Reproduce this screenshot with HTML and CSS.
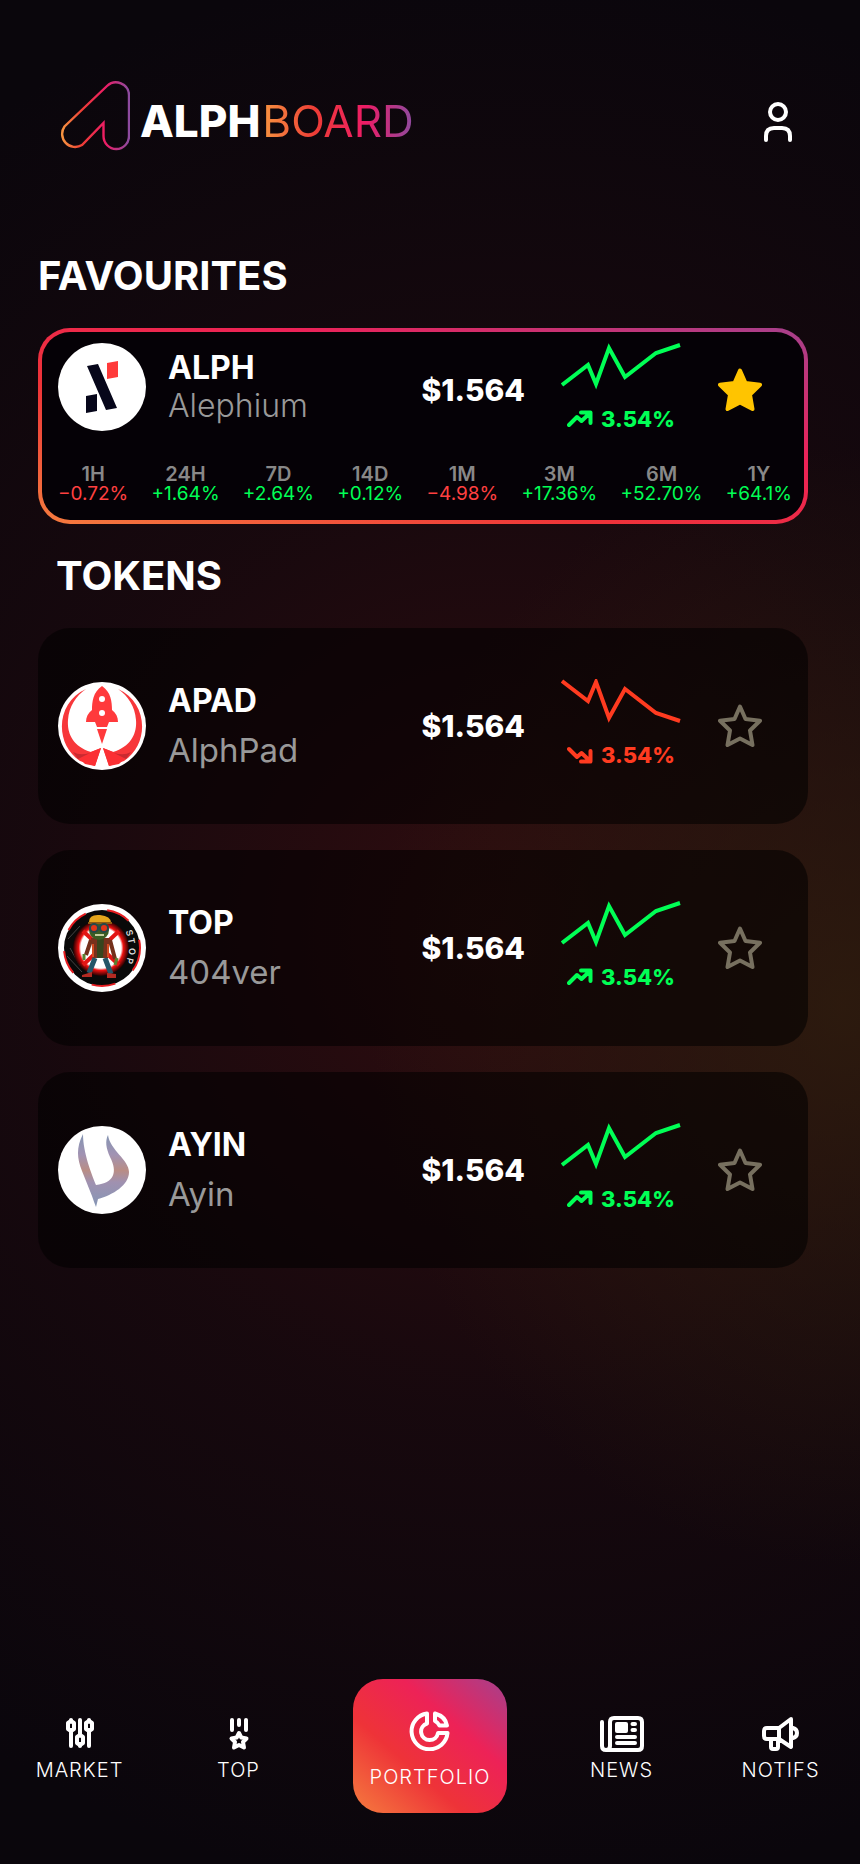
FILE: index.html
```html
<!DOCTYPE html>
<html lang="en">
<head>
    <meta charset="UTF-8">
    <meta name="viewport" content="width=device-width, initial-scale=1.0">
    <title>AlphBoard</title>
    <link rel="stylesheet" href="styles.css">
</head>
<body>
    <!-- shared icons -->
    <svg class="sprite" aria-hidden="true">
        <symbol id="chart-up" viewBox="0 0 120 48">
            <path d="M1 42 L27 22 L35 41 L48 5 L64 34 L95 10 L119 2" fill="none" stroke="currentColor" stroke-width="4"/>
        </symbol>
        <symbol id="chart-down" viewBox="0 0 120 48">
            <path d="M1 2 L27 22 L35 3 L48 39 L64 10 L95 34 L119 42" fill="none" stroke="currentColor" stroke-width="4"/>
        </symbol>
        <symbol id="trend-up" viewBox="0 0 26 18">
            <path d="M2 15 L10 7 L14.500 11 L23 3 M14 2.500 H23.500 V13" fill="none" stroke="currentColor" stroke-width="4" stroke-linecap="round" stroke-linejoin="round"/>
        </symbol>
        <symbol id="trend-down" viewBox="0 0 26 18">
            <path d="M2 3 L10 11 L14.500 7 L23 15 M14 15.500 H23.500 V5" fill="none" stroke="currentColor" stroke-width="4" stroke-linecap="round" stroke-linejoin="round"/>
        </symbol>
        <symbol id="star" viewBox="0 0 44 44">
            <path d="M22 2.500 L27.500 15 L42 16.700 L32 26.500 L34.500 41 L22 34.500 L9.500 41 L12 26.500 L2 16.700 L16.500 15 Z" stroke="currentColor" stroke-width="4" stroke-linejoin="round"/>
        </symbol>
    </svg>

    <header>
        <a class="logo" href="#">
            <svg class="logo-mark" viewBox="0 0 70 70" fill="none">
                <defs>
                    <linearGradient id="logoGradient" x1="0" y1="0" x2="1" y2="0">
                        <stop offset="0" stop-color="#f79440"/>
                        <stop offset="0.3" stop-color="#ee3c36"/>
                        <stop offset="0.65" stop-color="#ed1c66"/>
                        <stop offset="1" stop-color="#8c4ba0"/>
                    </linearGradient>
                </defs>
                <path d="M47 5 A13 13 0 0 1 69 14 V55 A12.700 13 0 0 1 43.500 55 V42 L22 64 A13 13 0 0 1 4.500 45.500 Z" stroke="url(#logoGradient)" stroke-width="2.400"/>
            </svg>
            <span class="logo-text"><b>ALPH</b><span class="logo-board">BOARD</span></span>
        </a>
        <button class="profile" aria-label="Profile">
            <svg viewBox="0 0 32 42" fill="none" stroke="#fff" stroke-width="4" stroke-linecap="round">
                <circle cx="16" cy="11" r="8"/>
                <path d="M4 39 V35 Q4 27 12 27 H20 Q28 27 28 35 V39"/>
            </svg>
        </button>
    </header>

    <main>
        <h2>FAVOURITES</h2>
        <section class="card favourite">
            <div class="row">
                <svg class="avatar" viewBox="0 0 88 88">
                    <circle cx="44" cy="44" r="44" fill="#fff"/>
                    <path d="M29 23 L40 21 L59 65 L48 67 Z M28 53 L39 51 V68 L28 70 Z" fill="#06061a"/>
                    <path d="M49 20 L60 18 V34 L49 36 Z" fill="#ff3a3a"/>
                </svg>
                <div class="name">
                    <h3>ALPH</h3>
                    <p>Alephium</p>
                </div>
                <span class="price">$1.564</span>
                <div class="trend up">
                    <svg class="chart"><use href="#chart-up"/></svg>
                    <span class="change"><svg><use href="#trend-up"/></svg>3.54%</span>
                </div>
                <button class="star starred" aria-label="Remove from favourites"><svg><use href="#star"/></svg></button>
            </div>
            <dl class="periods">
                <div><dt>1H</dt><dd class="down">−0.72%</dd></div>
                <div><dt>24H</dt><dd class="up">+1.64%</dd></div>
                <div><dt>7D</dt><dd class="up">+2.64%</dd></div>
                <div><dt>14D</dt><dd class="up">+0.12%</dd></div>
                <div><dt>1M</dt><dd class="down">−4.98%</dd></div>
                <div><dt>3M</dt><dd class="up">+17.36%</dd></div>
                <div><dt>6M</dt><dd class="up">+52.70%</dd></div>
                <div><dt>1Y</dt><dd class="up">+64.1%</dd></div>
            </dl>
        </section>

        <h2 class="indent">TOKENS</h2>
        <div class="tokens">
            <section class="card row">
                <svg class="avatar" viewBox="0 0 88 88">
                    <circle cx="44" cy="44" r="44" fill="#fff"/>
                    <path d="M28 7 C-2 20 -4 62 22 79 L37 84 L43 66 L33 70 C14 64 9 50 10 38 C11 24 18 14 28 7 Z M60 7 C90 20 92 62 66 79 L51 84 L45 66 L55 70 C74 64 79 50 78 38 C77 24 70 14 60 7 Z" fill="#f7373a"/>
                    <path d="M20 75 L43 66 L37 84 L27 82 Z M68 75 L45 66 L51 84 L61 82 Z" fill="#fb3034"/>
                    <path d="M15 70 Q22 74 32 71 L20 77 Z M73 70 Q66 74 56 71 L68 77 Z" fill="#c92a30"/>
                    <path d="M44 4 C35 10 34 20 34 28 C30 31 28 35 28 40 H37 L39 45 H49 L51 40 H60 C60 35 58 31 54 28 C54 20 53 10 44 4 Z M39 47 H49 L44 62 Z" fill="#ff3a3c"/>
                    <circle cx="44" cy="17" r="3" fill="#fff"/>
                    <circle cx="44" cy="31" r="3" fill="#fff"/>
                </svg>
                <div class="name">
                    <h3>APAD</h3>
                    <p>AlphPad</p>
                </div>
                <span class="price">$1.564</span>
                <div class="trend falling">
                    <svg class="chart"><use href="#chart-down"/></svg>
                    <span class="change"><svg><use href="#trend-down"/></svg>3.54%</span>
                </div>
                <button class="star" aria-label="Add to favourites"><svg><use href="#star"/></svg></button>
            </section>

            <section class="card row">
                <svg class="avatar" viewBox="0 0 88 88">
                    <defs>
                        <radialGradient id="stopGlow">
                            <stop offset="0.72" stop-color="#fff"/>
                            <stop offset="0.8" stop-color="#f01010"/>
                            <stop offset="1" stop-color="#200"/>
                        </radialGradient>
                    </defs>
                    <circle cx="44" cy="44" r="44" fill="#fff"/>
                    <circle cx="44" cy="44" r="38" fill="#090909" stroke="#e51c20" stroke-width="2" stroke-dasharray="24 22"/>
                    <path d="M10 35 L22 22 M12 44 L22 62 M9 52 L24 68" stroke="#444" stroke-width="1"/>
                    <circle cx="43" cy="44" r="28" fill="url(#stopGlow)"/>
                    <path d="M25 27 L61 61 M61 27 L25 61" stroke="#e31515" stroke-width="4"/>
                    <path d="M37 54 L31 69 M47 54 L53 70" stroke="#245668" stroke-width="5"/>
                    <path d="M24 71 L34 68 V73 H24 Z M49 69 L58 70 V74 H49 Z" fill="#b32a22"/>
                    <path d="M33 36 L28 51 M52 36 L57 55" stroke="#74301b" stroke-width="4"/>
                    <path d="M33 34 H52 L50 54 H35 Z" fill="#78301c"/>
                    <path d="M39 34 H46 L45 54 H39 Z" fill="#37451e"/>
                    <path d="M35 40 V53 M50 40 V53" stroke="#d44b20" stroke-width="2"/>
                    <circle cx="41" cy="26" r="10" fill="#3b5d23"/>
                    <path d="M31 18 Q31 10 42 11 Q53 12 53 19 Z" fill="#e4a51c"/>
                    <path d="M30 19 H54" stroke="#8d5b13" stroke-width="2"/>
                    <circle cx="36" cy="24" r="4" fill="#e33518" stroke="#25474a" stroke-width="2"/>
                    <circle cx="46" cy="24" r="4" fill="#e33518" stroke="#25474a" stroke-width="2"/>
                    <path d="M37 31 H46" stroke="#c4cc9c" stroke-width="2"/>
                    <path d="M26 50 V56 M59 54 L57 61" stroke="#5a8130" stroke-width="3"/>
                    <g class="stop-text">
                        <text x="69" y="31" transform="rotate(70 71 28)">S</text>
                        <text x="71" y="39" transform="rotate(80 73 36)">T</text>
                        <text x="72" y="49" transform="rotate(95 74 46)">O</text>
                        <text x="70" y="59" transform="rotate(105 72 56)">P</text>
                    </g>
                </svg>
                <div class="name">
                    <h3>TOP</h3>
                    <p>404ver</p>
                </div>
                <span class="price">$1.564</span>
                <div class="trend up">
                    <svg class="chart"><use href="#chart-up"/></svg>
                    <span class="change"><svg><use href="#trend-up"/></svg>3.54%</span>
                </div>
                <button class="star" aria-label="Add to favourites"><svg><use href="#star"/></svg></button>
            </section>

            <section class="card row">
                <svg class="avatar" viewBox="0 0 88 88">
                    <defs>
                        <linearGradient id="ayinGradient" x1="0" y1="0" x2="0" y2="1">
                            <stop offset="0" stop-color="#8495b2"/>
                            <stop offset="0.28" stop-color="#a193b3"/>
                            <stop offset="0.5" stop-color="#b98d85"/>
                            <stop offset="0.66" stop-color="#a091b0"/>
                            <stop offset="1" stop-color="#8496b5"/>
                        </linearGradient>
                    </defs>
                    <circle cx="44" cy="44" r="44" fill="#fff"/>
                    <path d="M25 8 C18 22 19 32 24 45 L34 70 Q36 76 38 81 L40 73 C55 69 71 59 71 46 C71 34 52 24 50 9 C47 15 48 22 52 31 C60 46 56 57 38 59 C34 49 25 27 25 8 Z" fill="url(#ayinGradient)"/>
                </svg>
                <div class="name">
                    <h3>AYIN</h3>
                    <p>Ayin</p>
                </div>
                <span class="price">$1.564</span>
                <div class="trend up">
                    <svg class="chart"><use href="#chart-up"/></svg>
                    <span class="change"><svg><use href="#trend-up"/></svg>3.54%</span>
                </div>
                <button class="star" aria-label="Add to favourites"><svg><use href="#star"/></svg></button>
            </section>
        </div>
    </main>

    <nav>
        <a href="#">
            <svg viewBox="0 0 44 40" fill="none" stroke="#fff" stroke-width="4" stroke-linecap="round" stroke-linejoin="round">
                <path d="M13 8 V9 M13 19 V34 M22 8 V23 M22 33 V34 M31 8 V9 M31 19 V34"/>
                <path d="M13 9 L16 11 V17 L13 19 L10 17 V11 Z M31 9 L34 11 V17 L31 19 L28 17 V11 Z M22 23 L25 25 V31 L22 33 L19 31 V25 Z"/>
            </svg>
            MARKET
        </a>
        <a href="#">
            <svg viewBox="0 0 44 40" fill="none" stroke="#fff" stroke-width="4" stroke-linecap="round" stroke-linejoin="round">
                <path d="M15 8 V18 M22 8 V13 M29 8 V18"/>
                <path d="M22 21 L24.300 25.500 L29.500 26.500 L26 30 L27 35.500 L22 33 L17 35.500 L18 30 L14.500 26.500 L19.700 25.500 Z"/>
            </svg>
            TOP
        </a>
        <a class="active" href="#">
            <svg viewBox="0 0 44 40" fill="none" stroke="#fff" stroke-width="4" stroke-linecap="round" stroke-linejoin="round">
                <path d="M19 2.500 A18 18 0 1 0 39.500 22 H30 A8.500 8.500 0 1 1 19 12.500 Z"/>
                <path d="M27 2.500 V10 Q30 11.500 31.500 14.500 H39 Q37.500 5.500 27 2.500 Z"/>
            </svg>
            PORTFOLIO
        </a>
        <a href="#">
            <svg viewBox="0 0 44 40" fill="none" stroke="#fff" stroke-width="4" stroke-linecap="round" stroke-linejoin="round">
                <path d="M10 34 V10 Q10 6 14 6 H38 Q42 6 42 10 V34 Q42 38 38 38 H6 Q2 38 2 34 V10 M10 34 Q10 38 6 38"/>
                <path d="M17 25 H35 M17 31 H35 M32.500 12 H35 M32.500 18 H35"/>
                <rect x="15" y="10" width="13" height="11" rx="2" fill="#fff" stroke="none"/>
            </svg>
            NEWS
        </a>
        <a href="#">
            <svg viewBox="0 0 44 40" fill="none" stroke="#fff" stroke-width="4" stroke-linecap="round" stroke-linejoin="round">
                <path d="M20 16 H8 Q5 16 5 19 V24 Q5 27 8 27 H20 L32 35 V7 L20 16 V27 M12 27 V35 Q12 37 14 37 H17 Q19 37 19 35 V27 M34 16 Q38 17 38 21 Q38 25 34 26"/>
            </svg>
            NOTIFS
        </a>
    </nav>
</body>
</html>
```
FILE: styles.css
```css
* {
    box-sizing: border-box;
}
body {
    margin: 0;
    min-height: 100vh;
    display: flex;
    flex-direction: column;
    background-color: #0a060c;
    background-image:
        radial-gradient(ellipse 55% 30% at 98% 54%, rgba(48, 30, 14, 0.8), rgba(48, 30, 14, 0)),
        radial-gradient(ellipse 110% 52% at 58% 50%, rgba(54, 14, 16, 0.85), rgba(42, 12, 16, 0.4) 50%, rgba(30, 10, 12, 0));
    color: #fff;
    font-family: Inter, sans-serif;
}
h2, h3, p, dl, dd {
    margin: 0;
}
a {
    color: inherit;
    text-decoration: none;
}
button {
    padding: 0;
    border: none;
    background: none;
    color: inherit;
    cursor: pointer;
}
svg {
    display: block;
}
.sprite {
    position: absolute;
    width: 0;
    height: 0;
}
header {
    display: flex;
    justify-content: space-between;
    align-items: center;
    padding: 80px 66px 0 60px;
}
.logo {
    display: flex;
    align-items: center;
    gap: 10px;
}
.logo-mark {
    width: 70px;
    height: 72px;
}
.logo-text {
    display: flex;
    gap: 2px;
    padding-top: 10px;
    font-size: 44px;
    line-height: 52px;
}
.logo-text b {
    font-weight: 800;
}
.logo-board {
    font-weight: 400;
    background: linear-gradient(90deg, #f79440, #ee3c36 35%, #ed1c66 68%, #8c4ba0);
    -webkit-background-clip: text;
    background-clip: text;
    color: transparent;
}
.profile {
    padding-top: 12px;
}
.profile svg {
    width: 32px;
    height: 42px;
}
main {
    flex: 1;
    padding: 100px 52px 0 38px;
}
h2 {
    font-size: 40px;
    line-height: 48px;
    font-weight: 700;
}
h2.indent {
    padding: 28px 0 0 18px;
}
.card {
    height: 196px;
    padding: 0 20px;
    border-radius: 32px;
    background: rgba(0, 0, 0, 0.55);
}
.row {
    display: flex;
    align-items: center;
}
.favourite {
    margin-top: 28px;
    padding: 5px 16px 0;
    border: 4px solid transparent;
    background:
        linear-gradient(#050106, #050106) padding-box,
        linear-gradient(to top right, #f79440 -12%, #ee3338 36%, #ed2257 66%, #8c4ba0 112%) border-box;
}
.tokens {
    display: flex;
    flex-direction: column;
    gap: 26px;
    margin-top: 28px;
}
.avatar {
    width: 88px;
    height: 88px;
    margin-right: 22px;
}
.stop-text {
    fill: #ddd;
    font-size: 9px;
    font-weight: 600;
}
.name {
    flex: 1;
}
.name h3 {
    font-size: 32px;
    line-height: 48px;
    font-weight: 700;
}
.name p {
    font-size: 33px;
    line-height: 50px;
    font-weight: 400;
    color: #999;
}
.favourite .name h3, .favourite .name p {
    font-size: 32px;
    line-height: 38px;
}
.favourite .name p {
    font-weight: 300;
}
.price {
    font-size: 30px;
    line-height: 48px;
    font-weight: 800;
}
.trend {
    width: 120px;
    margin: 0 37px 0 36px;
}
.chart {
    width: 120px;
    height: 48px;
}
.change {
    display: flex;
    justify-content: center;
    align-items: center;
    gap: 8px;
    margin-top: 10px;
    font-size: 22px;
    line-height: 36px;
    font-weight: 800;
}
.change svg {
    width: 26px;
    height: 18px;
}
.up {
    color: #00ff55;
}
.down {
    color: #ff4040;
}
.falling {
    color: #ff3b20;
}
.star {
    margin-right: 26px;
    color: #77705f;
}
.star svg {
    width: 44px;
    height: 44px;
    fill: none;
}
.starred {
    color: #ffc400;
}
.starred svg {
    fill: #ffc400;
}
.favourite .price, .favourite .trend, .favourite .star {
    margin-top: 6px;
}
.periods {
    display: flex;
    justify-content: space-between;
    margin-top: 27px;
    margin-right: -4px;
    font-size: 19px;
    line-height: 20px;
    text-align: center;
}
.periods dt {
    font-size: 20px;
    font-weight: 600;
    color: #888;
}
nav {
    display: grid;
    grid-template-columns: 1fr 1fr 224px 1fr 1fr;
    justify-items: center;
    align-items: center;
    padding-bottom: 51px;
}
nav a {
    display: flex;
    flex-direction: column;
    align-items: center;
    gap: 6px;
    padding-top: 2px;
    font-size: 20px;
    line-height: 24px;
    font-weight: 300;
    letter-spacing: 1px;
}
nav svg {
    width: 44px;
    height: 40px;
}
nav .active {
    justify-content: center;
    gap: 14px;
    width: 154px;
    height: 134px;
    padding-top: 8px;
    border-radius: 30px;
    background: linear-gradient(to top right, #f79440 -12%, #ee3338 36%, #ed2257 66%, #8c4ba0 112%);
}
```
